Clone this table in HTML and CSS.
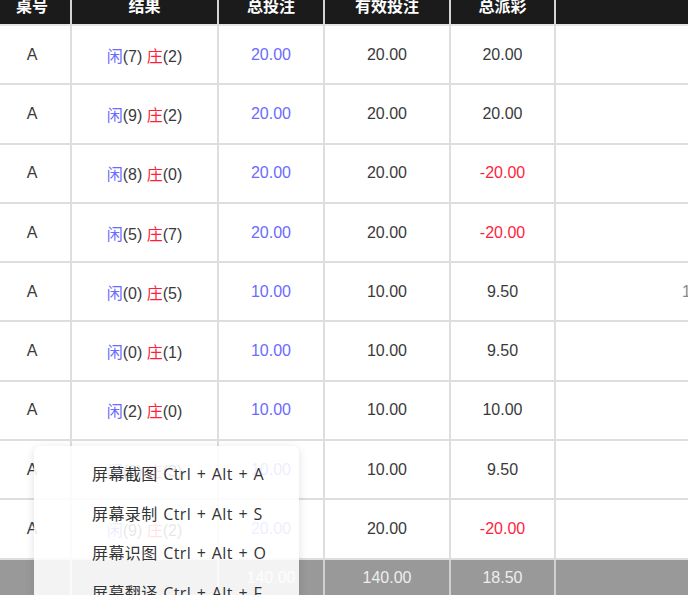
FILE: index.html
```html
<!DOCTYPE html>
<html lang="zh-CN">
<head>
<meta charset="utf-8">
<title>投注记录</title>
<link rel="stylesheet" href="styles.css">
</head>
<body>
<div class="scroller">
  <table class="records">
    <colgroup>
      <col class="c-table">
      <col class="c-result">
      <col class="c-bet">
      <col class="c-valid">
      <col class="c-payout">
      <col class="c-extra">
    </colgroup>
    <thead>
      <tr><th>桌号</th><th>结果</th><th>总投注</th><th>有效投注</th><th>总派彩</th><th class="last"></th></tr>
    </thead>
    <tbody>
      <tr><td>A</td><td><span class="p">闲</span>(7) <span class="b">庄</span>(2)</td><td class="blue">20.00</td><td>20.00</td><td>20.00</td><td class="last"></td></tr>
      <tr><td>A</td><td><span class="p">闲</span>(9) <span class="b">庄</span>(2)</td><td class="blue">20.00</td><td>20.00</td><td>20.00</td><td class="last"></td></tr>
      <tr><td>A</td><td><span class="p">闲</span>(8) <span class="b">庄</span>(0)</td><td class="blue">20.00</td><td>20.00</td><td class="red">-20.00</td><td class="last"></td></tr>
      <tr><td>A</td><td><span class="p">闲</span>(5) <span class="b">庄</span>(7)</td><td class="blue">20.00</td><td>20.00</td><td class="red">-20.00</td><td class="last"></td></tr>
      <tr><td>A</td><td><span class="p">闲</span>(0) <span class="b">庄</span>(5)</td><td class="blue">10.00</td><td>10.00</td><td>9.50</td><td class="last edge"><span>1</span></td></tr>
      <tr><td>A</td><td><span class="p">闲</span>(0) <span class="b">庄</span>(1)</td><td class="blue">10.00</td><td>10.00</td><td>9.50</td><td class="last"></td></tr>
      <tr><td>A</td><td><span class="p">闲</span>(2) <span class="b">庄</span>(0)</td><td class="blue">10.00</td><td>10.00</td><td>10.00</td><td class="last"></td></tr>
      <tr><td>A</td><td><span class="p">闲</span>(6) <span class="b">庄</span>(3)</td><td class="blue">10.00</td><td>10.00</td><td>9.50</td><td class="last"></td></tr>
      <tr><td>A</td><td><span class="p">闲</span>(9) <span class="b">庄</span>(2)</td><td class="blue">20.00</td><td>20.00</td><td class="red">-20.00</td><td class="last"></td></tr>
    </tbody>
    <tfoot>
      <tr><td></td><td></td><td>140.00</td><td>140.00</td><td>18.50</td><td class="last"></td></tr>
    </tfoot>
  </table>
</div>

<ul class="context-menu">
  <li>屏幕截图 Ctrl + Alt + A</li>
  <li>屏幕录制 Ctrl + Alt + S</li>
  <li>屏幕识图 Ctrl + Alt + O</li>
  <li>屏幕翻译 Ctrl + Alt + F</li>
</ul>
</body>
</html>
```

FILE: styles.css
```css
html, body {
  margin: 0;
  padding: 0;
  background: #fff;
  overflow: hidden;
  height: 595px;
}

.scroller {
  margin: -14px 0 0 -6px;
}

.records {
  table-layout: fixed;
  border-collapse: separate;
  border-spacing: 0;
  width: 830px;
  font-family: "Liberation Sans", "Noto Sans CJK SC", sans-serif;
  font-size: 16px;
  color: #3a3a3a;
}

.c-table { width: 78px; }
.c-result { width: 147px; }
.c-bet { width: 106px; }
.c-valid { width: 126px; }
.c-payout { width: 105px; }
.c-extra { width: 268px; }

.records th,
.records td {
  box-sizing: border-box;
  text-align: center;
  padding: 0;
  border-right: 2px solid #dedede;
  border-bottom: 2px solid #dedede;
}

.records th {
  height: 40px;
  background: #1b1b1b;
  color: #fff;
  font-weight: bold;
  border-right-color: #d4d4d4;
  border-bottom-color: #e6e6e6;
}

.records tbody td {
  height: 59.3px;
}

.records .last {
  border-right: 0;
}

.records tfoot td {
  height: 40px;
  background: #999;
  color: #eee;
  border-bottom: 0;
  border-right-color: #d0d0d0;
  vertical-align: top;
  padding-top: 9px;
}

.p, .blue { color: #6b6bff; }
.b, .red { color: #ff1f3d; }

.edge {
  text-align: left !important;
}
.edge span {
  padding-left: 126px;
  color: #888;
}

.context-menu {
  position: absolute;
  left: 34px;
  top: 446px;
  width: 265px;
  margin: 0;
  padding: 9px 0 0;
  list-style: none;
  background: rgba(255, 255, 255, 0.88);
  border-radius: 6px;
  box-shadow: 0 2px 10px rgba(0, 0, 0, 0.12);
  font-family: "Open Sans", "Noto Sans CJK SC", sans-serif;
  font-size: 16px;
  letter-spacing: 0.4px;
  word-spacing: 1px;
  color: #333;
}

.context-menu li {
  height: 39.5px;
  line-height: 39.5px;
  padding-left: 58px;
  white-space: nowrap;
}
```
